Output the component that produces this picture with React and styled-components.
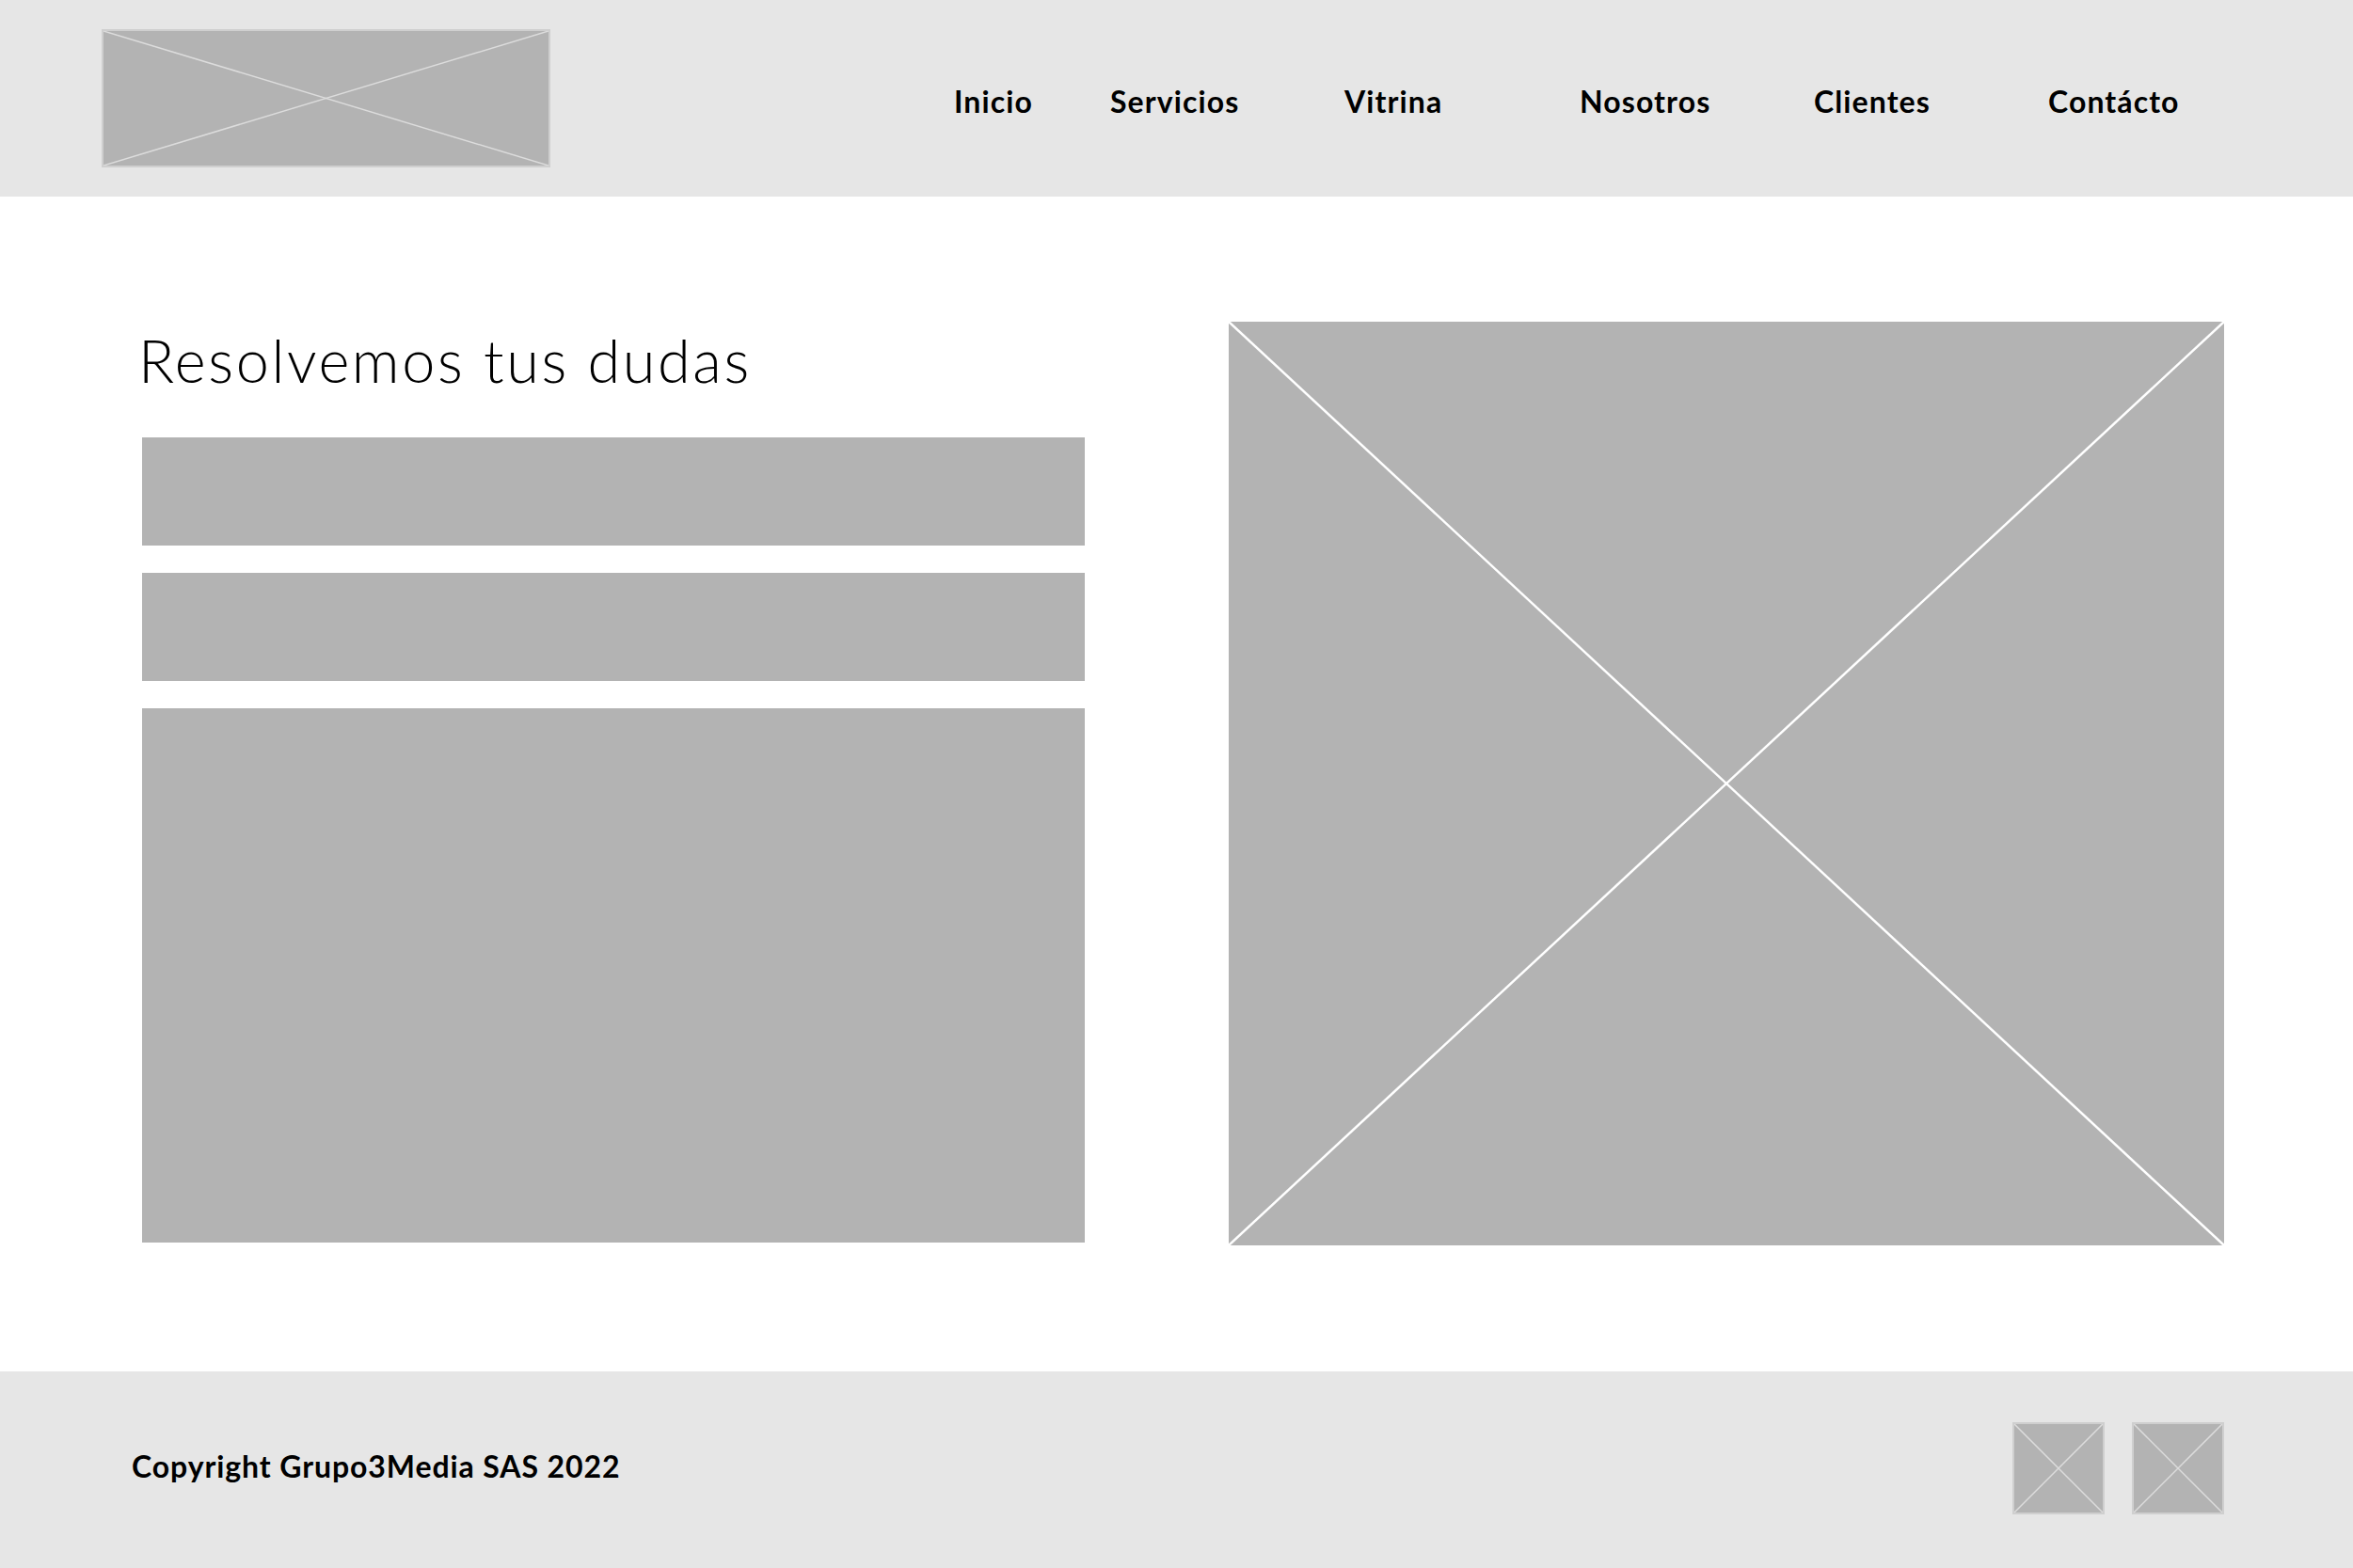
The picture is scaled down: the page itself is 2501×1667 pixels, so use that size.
import React from "react";
import styled, { createGlobalStyle } from "styled-components";

const GlobalStyle = createGlobalStyle`
  html, body {
    margin: 0;
    padding: 0;
    background: #ffffff;
    font-family: Lato, "Liberation Sans", sans-serif;
    color: #000000;
  }
`

const Page = styled.div`
  width: 2501px;
  height: 1667px;
  display: flex;
  flex-direction: column;
`

const Header = styled.header`
  height: 209px;
  background: #e6e6e6;
  display: flex;
  align-items: center;
  padding-left: 108px;
  box-sizing: border-box;
`

const Nav = styled.nav`
  display: flex;
  align-items: center;
  margin-left: 429px;
  padding-top: 6px;
`

const NavItem = styled.a`
  width: ${props => props.w}px;
  font-family: Lato, "Liberation Sans", sans-serif;
  font-weight: 700;
  font-size: 32px;
  letter-spacing: 1.1px;
  color: #000;
  text-decoration: none;
  white-space: nowrap;
`

const PlaceholderBox = styled.div`
  position: relative;
  width: ${props => props.w}px;
  height: ${props => props.h}px;
  background: #b3b3b3;
  box-sizing: border-box;
  border: ${props => props.border ? "2px solid #cfcfcf" : "none"};
  flex-shrink: 0;

  svg {
    position: absolute;
    inset: 0;
    width: 100%;
    height: 100%;
  }
`

const Main = styled.main`
  flex: 1;
  display: grid;
  grid-template-columns: 1002px 1058px;
  column-gap: 153px;
  padding: 133px 0 0 151px;
  box-sizing: border-box;
  align-items: start;
`

const LeftCol = styled.div`
  display: flex;
  flex-direction: column;
  gap: 29px;
`

const Title = styled.h1`
  margin: 9px 0 22px -4px;
  font-family: Lato, "Liberation Sans", sans-serif;
  font-weight: 300;
  font-size: 63px;
  line-height: 63px;
  letter-spacing: 2.6px;
  color: #000;
`

const Block = styled.div`
  width: 100%;
  height: ${props => props.h}px;
  background: #b3b3b3;
`

const Footer = styled.footer`
  height: 209px;
  background: #e6e6e6;
  display: flex;
  align-items: center;
  justify-content: space-between;
  padding: 0 137px 4px 140px;
  box-sizing: border-box;
`

const Copyright = styled.span`
  font-family: Lato, "Liberation Sans", sans-serif;
  font-weight: 700;
  font-size: 32px;
  letter-spacing: 0.9px;
  color: #000;
  margin-top: -4px;
`

const Socials = styled.div`
  display: flex;
  gap: 29px;
`

const Cross = ({ color, width }) => (
  <svg viewBox="0 0 100 100" preserveAspectRatio="none">
    <line x1="0" y1="0" x2="100" y2="100" stroke={color} strokeWidth={width} vectorEffect="non-scaling-stroke" />
    <line x1="100" y1="0" x2="0" y2="100" stroke={color} strokeWidth={width} vectorEffect="non-scaling-stroke" />
  </svg>
)

const Placeholder = ({ w, h, border, lineColor = "#dcdcdc", lineWidth = 1.5 }) => (
  <PlaceholderBox w={w} h={h} border={border}>
    <Cross color={lineColor} width={lineWidth} />
  </PlaceholderBox>
)

const navLinks = [
  { label: "Inicio", w: 166 },
  { label: "Servicios", w: 249 },
  { label: "Vitrina", w: 250 },
  { label: "Nosotros", w: 249 },
  { label: "Clientes", w: 249 },
  { label: "Contácto", w: 180 },
]

export default function App() {
  return (
    <>
      <GlobalStyle />
      <Page>
        <Header>
          <Placeholder w={477} h={147} border />
          <Nav>
            {navLinks.map(link => (
              <NavItem key={link.label} w={link.w}>{link.label}</NavItem>
            ))}
          </Nav>
        </Header>

        <Main>
          <LeftCol>
            <Title>Resolvemos tus dudas</Title>
            <Block h={115} />
            <Block h={115} />
            <Block h={568} />
          </LeftCol>
          <Placeholder w={1058} h={982} lineColor="#ffffff" lineWidth={2.5} />
        </Main>

        <Footer>
          <Copyright>Copyright Grupo3Media SAS 2022</Copyright>
          <Socials>
            <Placeholder w={98} h={98} border />
            <Placeholder w={98} h={98} border />
          </Socials>
        </Footer>
      </Page>
    </>
  );
}
